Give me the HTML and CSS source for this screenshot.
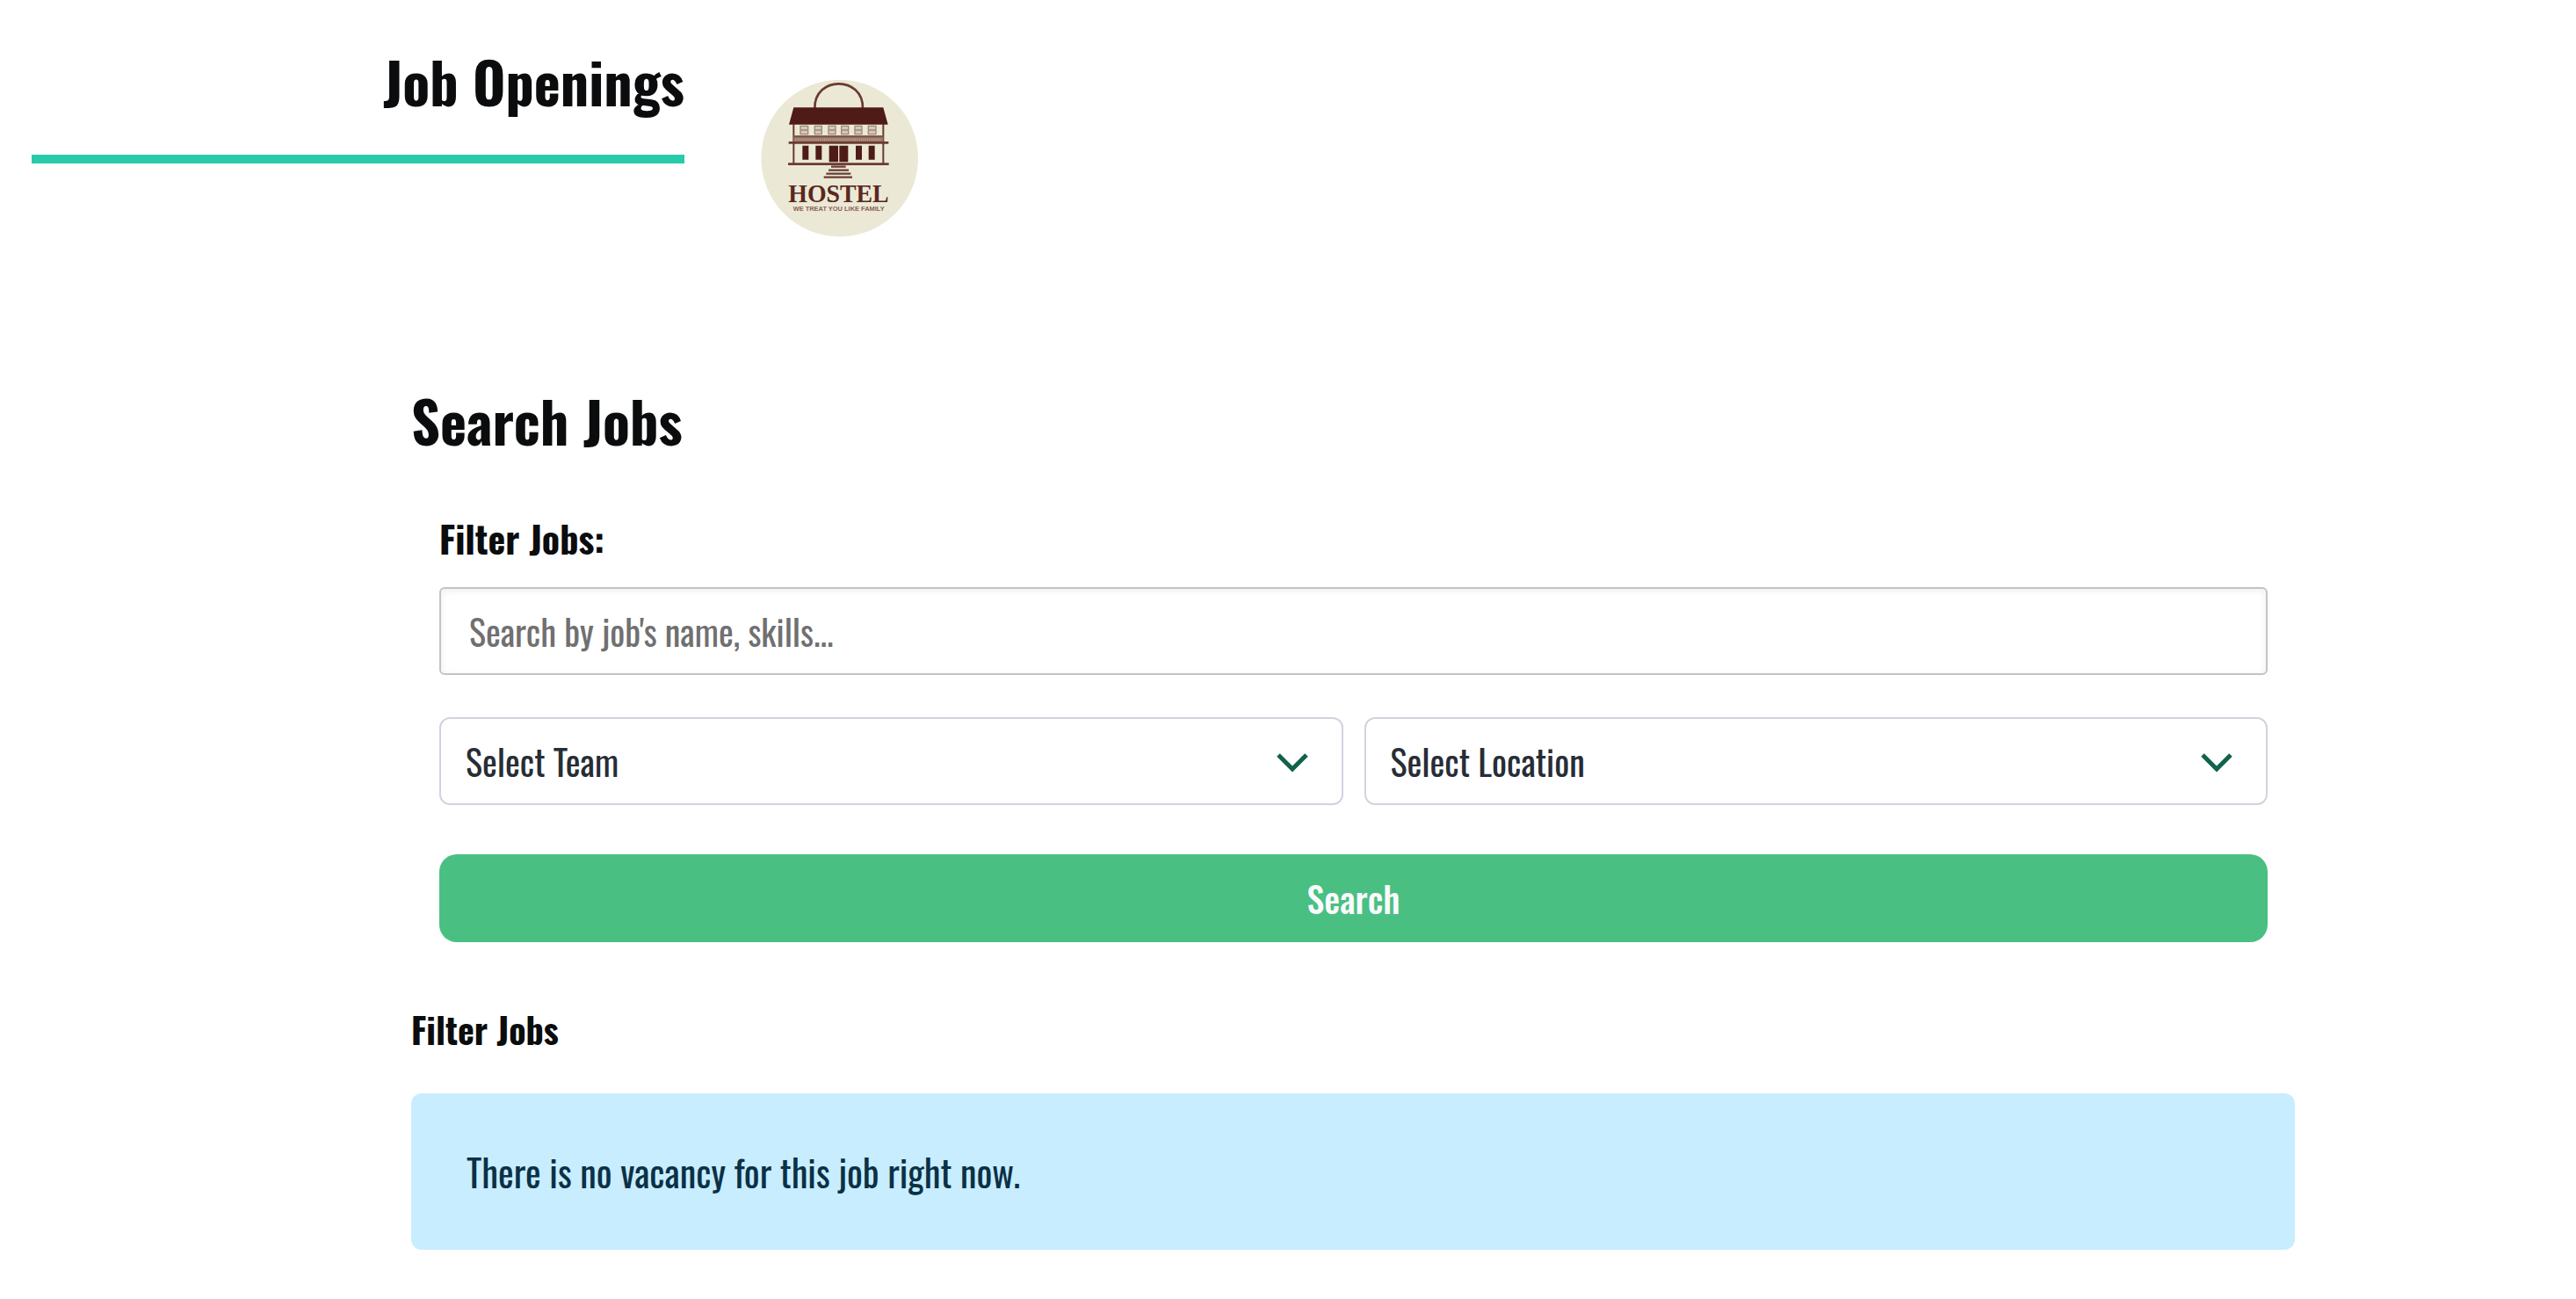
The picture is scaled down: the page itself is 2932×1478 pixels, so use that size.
FILE: index.html
```html
<!DOCTYPE html>
<html lang="en">
<head>
<meta charset="utf-8">
<title>Job Openings</title>
<link rel="stylesheet" href="styles.css">
</head>
<body>
<header class="header">
  <h1 class="title">Job Openings</h1>
  <svg class="logo" viewBox="48 30 540 540" aria-label="Hostel">
    <circle cx="317" cy="300" r="268" fill="#ebe9d5"/>
    <g fill="none" stroke="#6b3b33" stroke-width="6">
      <path d="M232 130C230 18 398 18 396 130" stroke-width="8"/>
      <path d="M160 184V318M466 184V318"/>
      <path d="M143 247H484M141 320H485" stroke-width="8"/>
      <path d="M288 329H338M279 341H348M271 353H355M263 365H360" stroke-width="7"/>
    </g>
    <path d="M160 127H466L482 185H144Z" fill="#4f1b17"/>
    <path d="M160 222H466V243H160Z" fill="#9b7b6c"/>
    <path d="M160 226H466" stroke="#7a5147" stroke-width="5"/>
    <path d="M166 236H460" stroke="#b7a28f" stroke-width="7" stroke-dasharray="3 4"/>
    <path d="M183 190h26v28h-26zM232 190h24v28h-24zM279 190h24v28h-24zM323 190h24v28h-24zM369 190h24v28h-24zM415 190h26v28h-26zM183 204h26M232 204h24M279 204h24M323 204h24M369 204h24M415 204h26" fill="#d3c8b5" stroke="#a18678" stroke-width="4"/>
    <path d="M190 257h21v48h-21zM235 257h21v48h-21zM281 257h31v56h-31zM316 257h30v56h-30zM372 257h21v48h-21zM416 257h21v48h-21z" fill="#4f1b17"/>
    <text class="logo-name" x="142" y="450" textLength="343" lengthAdjust="spacingAndGlyphs">HOSTEL</text>
    <text class="logo-tag" x="158" y="481" textLength="312" lengthAdjust="spacingAndGlyphs">WE TREAT YOU LIKE FAMILY</text>
  </svg>
</header>
<main class="main">
  <h2 class="heading">Search Jobs</h2>
  <form class="form">
    <label class="label" for="q">Filter Jobs:</label>
    <input class="field" id="q" type="text" placeholder="Search by job's name, skills...">
    <div class="selects">
      <div class="select">Select Team<svg class="chev" viewBox="0 0 36 22"><path d="M2 2L18 18L34 2"/></svg></div>
      <div class="select">Select Location<svg class="chev" viewBox="0 0 36 22"><path d="M2 2L18 18L34 2"/></svg></div>
    </div>
    <button class="button" type="button">Search</button>
  </form>
  <h3 class="sub">Filter Jobs</h3>
  <div class="alert">There is no vacancy for this job right now.</div>
</main>
</body>
</html>
```
FILE: styles.css
```css
*{box-sizing:border-box}
body{margin:0;background:#fff;font-family:Oswald,"Roboto Condensed",Roboto,sans-serif;color:#0b0c0d}
h1,h2,h3{margin:0}
.header{display:flex;gap:87px;padding:44px 0 0 36px;height:430px}
.title{width:743px;height:142px;border-bottom:10px solid #27cba9;font-size:64px;font-weight:700;line-height:96px;text-align:right}
.logo{width:180px;height:180px;margin-top:46px}
.logo-name{font:bold 91px "Liberation Serif",serif;fill:#5b2720}
.logo-tag{font:bold 23px "Liberation Sans",sans-serif;fill:#8a6055}
.main{width:2144px;margin-left:468px}
.heading{font-size:64px;font-weight:700;line-height:96px}
.form{padding:56px 31px 0 32px}
.label{display:block;font-size:42px;font-weight:700;line-height:60px}
.field{display:block;width:100%;height:100px;margin-top:26px;border:2px solid #c4c4c4;border-radius:6px;background:#fff;box-shadow:inset 0 2px 8px #00000012;padding:0 32px;font-family:inherit;font-size:40px}
.field::placeholder{color:#707070;opacity:1}
.selects{display:grid;grid-template-columns:1fr 1fr;gap:24px;margin-top:48px}
.select{display:flex;justify-content:space-between;height:100px;border:2px solid #d0d4de;border-radius:12px;padding:0 38px 0 28px;font-size:40px;line-height:96px;color:#272d36}
.chev{width:36px;height:22px;margin-top:39px;fill:none;stroke:#11624d;stroke-width:5}
.button{display:block;width:100%;height:100px;margin-top:56px;padding:0;border:0;border-radius:20px;background:#4abf82;color:#f8fafc;font-family:inherit;font-size:40px;font-weight:500;line-height:100px;text-align:center}
.sub{font-size:40px;line-height:60px;margin-top:69px}
.alert{height:178px;margin-top:43px;border-radius:12px;background:#c8edff;color:#0b3146;font-size:42px;line-height:178px;padding:0 63px}
```
